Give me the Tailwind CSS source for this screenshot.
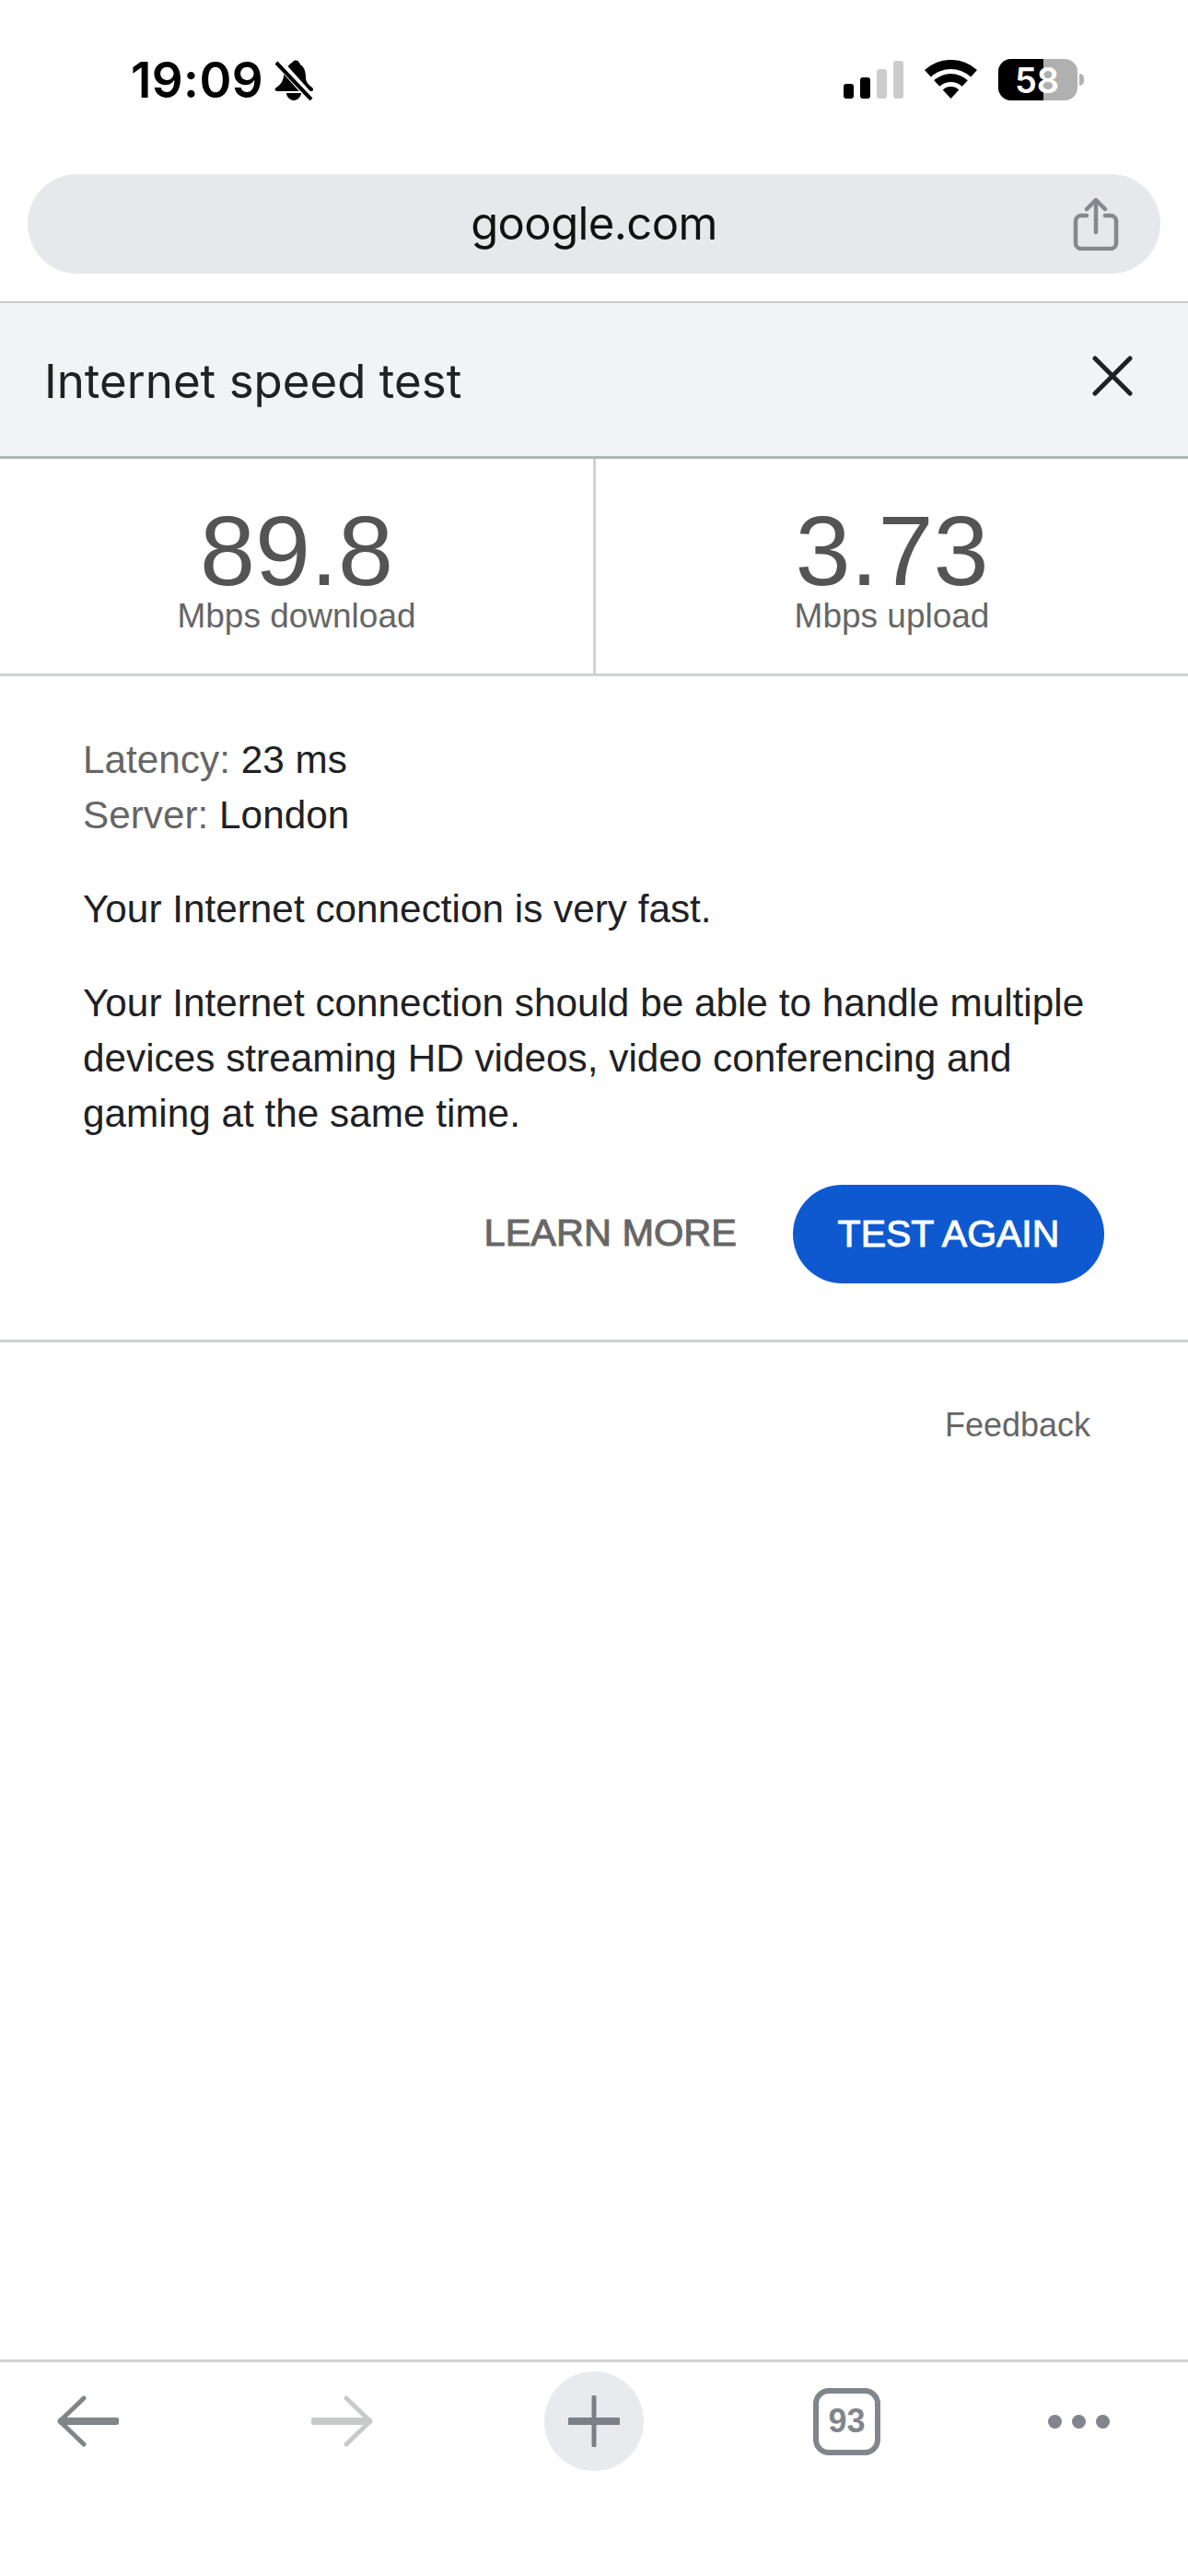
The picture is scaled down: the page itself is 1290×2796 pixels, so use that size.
<!DOCTYPE html>
<html lang="en">
  <head>
    <meta charset="UTF-8" />
    <meta name="viewport" content="width=device-width, initial-scale=1.0" />
    <title>Internet speed test</title>
    <script src="https://cdn.jsdelivr.net/npm/@tailwindcss/browser@4"></script>
  </head>
  <body class="bg-white">
    <div class="w-[1290px] h-[2796px] flex flex-col overflow-hidden font-['Liberation_Sans',sans-serif]">
      <!-- status bar -->
      <div class="h-[189px] shrink-0 flex items-start justify-between pl-[142px] pr-[113px] pt-[64px]">
        <div class="flex items-center gap-[12px] h-[46px]">
          <span class="font-['Inter',sans-serif] font-semibold text-[53px] leading-[46px] tracking-[0.4px] text-black">19:09</span>
          <svg class="w-[42px] h-[44px]" viewBox="0 0 42 44">
            <path d="M20 2c3-3 7-1 8 3 5 3 6 9 6 14 0 5 3 8 7 11 2 2 1 4-1 4H3c-3 0-3-3-1-4 5-3 7-7 8-12 1-6 3-11 10-16z" fill="#000" />
            <path d="M13 36h16c0 4-4 8-8 8s-8-4-8-8z" fill="#000" />
            <path d="M4 2l37 41" stroke="#fff" stroke-width="9" />
            <path d="M2 3l38 40" stroke="#000" stroke-width="4" />
          </svg>
        </div>
        <div class="flex items-start">
          <div class="flex items-end gap-[7px] h-[43px] w-[66px]">
            <div class="w-[11px] h-[16px] rounded-[3px] bg-black"></div>
            <div class="w-[11px] h-[23px] rounded-[3px] bg-black"></div>
            <div class="w-[11px] h-[32px] rounded-[3px] bg-[#cccccc]"></div>
            <div class="w-[11px] h-[41px] rounded-[3px] bg-[#cccccc]"></div>
          </div>
          <svg class="ml-[22px] mt-[1px] w-[57px] h-[42px]" viewBox="0 0 57 42">
            <path d="M0 11.1A42 42 0 0 1 57 11.1L50.2 18.5A32 32 0 0 0 6.8 18.5z" fill="#000" />
            <path d="M10.2 22.2A27 27 0 0 1 46.8 22.2L40.7 28.8A18 18 0 0 0 16.3 28.8z" fill="#000" />
            <path d="M19.7 32.4A13 13 0 0 1 37.3 32.4L28.5 42z" fill="#000" />
          </svg>
          <div class="ml-[23px] flex items-center">
            <div class="relative w-[86px] h-[45px] rounded-[14px] overflow-hidden bg-[#b0b0b0]">
              <div class="h-full w-[49px] bg-black"></div>
              <span class="absolute inset-0 pr-[2px] flex items-center justify-center font-['Inter',sans-serif] font-semibold text-[38px] leading-none text-white">58</span>
            </div>
            <div class="ml-[2px] w-[5px] h-[13px] rounded-r-full bg-[#b0b0b0]"></div>
          </div>
        </div>
      </div>

      <!-- address bar -->
      <div class="h-[138px] shrink-0 px-[30px]">
        <div class="relative h-[108px] rounded-[54px] bg-[#e6e8eb] flex items-center justify-center">
          <span class="mb-[2px] font-['Inter',sans-serif] text-[49px] leading-none tracking-[-0.6px] text-[#111111]">google.com</span>
          <svg class="absolute right-[45px] top-[26px] w-[50px] h-[57px]" viewBox="0 0 50 57" fill="none" stroke="#85888c" stroke-width="4.5" stroke-linecap="round" stroke-linejoin="round">
            <path d="M15 19H9a6 6 0 0 0-6 6v24a6 6 0 0 0 6 6h32a6 6 0 0 0 6-6V25a6 6 0 0 0-6-6h-6" />
            <path d="M25 37V3M15 12l10-10 10 10" />
          </svg>
        </div>
      </div>

      <!-- card header -->
      <div class="h-[171px] shrink-0 flex items-center justify-between pl-[48px] pr-[60px] bg-[#f1f3f4] border-t-2 border-b-[3px] border-t-[#c8cacb] border-b-[#b3b6b7]">
        <span class="mt-[2px] font-['Inter',sans-serif] text-[51px] leading-none text-[#202124]">Internet speed test</span>
        <svg class="w-[44px] h-[44px] mb-[8px]" viewBox="0 0 44 44" fill="none" stroke="#202124" stroke-width="5" stroke-linecap="round">
          <path d="M3 3l38 38M41 3L3 41" />
        </svg>
      </div>

      <!-- results -->
      <div class="h-[236px] shrink-0 grid grid-cols-[647px_1fr] border-b-[3px] border-[#d0d2d3]">
        <div class="border-r-[3px] border-[#d0d2d3] flex flex-col items-center pt-[50px]">
          <div class="text-[108px] leading-[100px] text-[#545454]">89.8</div>
          <div class="-mt-[1px] text-[37px] leading-[44px] text-[#666666]">Mbps download</div>
        </div>
        <div class="flex flex-col items-center pt-[50px]">
          <div class="text-[108px] leading-[100px] text-[#545454]">3.73</div>
          <div class="-mt-[1px] text-[37px] leading-[44px] text-[#666666]">Mbps upload</div>
        </div>
      </div>

      <!-- details -->
      <div class="shrink-0 pt-[61px] pl-[90px] pr-[91px] text-[42.3px] leading-[60px] text-[#202124]">
        <div><span class="text-[#666666]">Latency:</span> 23 ms</div>
        <div><span class="text-[#666666]">Server:</span> London</div>
        <p class="mt-[42px]">Your Internet connection is very fast.</p>
        <p class="mt-[42px] whitespace-nowrap">Your Internet connection should be able to handle multiple<br />devices streaming HD videos, video conferencing and<br />gaming at the same time.</p>
        <div class="mt-[47px] flex items-center justify-end gap-[61px]">
          <span class="mb-[4px] text-[41.5px] leading-none text-[#666666] [-webkit-text-stroke:1px_#666666]">LEARN MORE</span>
          <button class="h-[107px] w-[338px] rounded-[54px] bg-[#0f59d0] text-[41px] leading-none text-white [-webkit-text-stroke:1px_#ffffff]">TEST AGAIN</button>
        </div>
      </div>

      <div class="mt-[61px] shrink-0 border-t-[3px] border-[#d0d2d3] pt-[68px] pr-[106px] text-right text-[36px] leading-[44px] text-[#666666]">Feedback</div>

      <!-- bottom toolbar -->
      <div class="mt-auto h-[235px] shrink-0 border-t-[3px] border-[#d0d2d3] pl-[62px] pr-[85px] pt-[10px]">
        <div class="relative h-[108px] flex items-center justify-between">
          <svg class="w-[67px] h-[56px]" viewBox="0 0 67 56" fill="none" stroke="#7f8589" stroke-linecap="round" stroke-linejoin="round">
            <path d="M29 3L3 28l26 25" stroke-width="5" />
            <path d="M5 28h59" stroke-width="8" />
          </svg>
          <svg class="absolute left-[276px] w-[67px] h-[56px]" viewBox="0 0 67 56" fill="none" stroke="#c8caca" stroke-linecap="round" stroke-linejoin="round">
            <path d="M38 3l26 25-26 25" stroke-width="5" />
            <path d="M3 28h59" stroke-width="8" />
          </svg>
          <div class="absolute left-[529px] w-[108px] h-[108px] rounded-full bg-[#e8eaed] flex items-center justify-center">
            <svg class="w-[56px] h-[56px]" viewBox="0 0 56 56" fill="none" stroke="#7a8085" stroke-linecap="round">
              <path d="M28 2v52" stroke-width="5" />
              <path d="M2 28h52" stroke-width="8" />
            </svg>
          </div>
          <div class="absolute left-[821px] w-[73px] h-[73px] rounded-[17px] border-[6px] border-[#80868b] flex items-center justify-center text-[36px] leading-none font-bold text-[#80868b]">93</div>
          <div class="flex gap-[11px]">
            <div class="w-[15px] h-[15px] rounded-full bg-[#80868b]"></div>
            <div class="w-[15px] h-[15px] rounded-full bg-[#80868b]"></div>
            <div class="w-[15px] h-[15px] rounded-full bg-[#80868b]"></div>
          </div>
        </div>
      </div>
    </div>
  </body>
</html>
